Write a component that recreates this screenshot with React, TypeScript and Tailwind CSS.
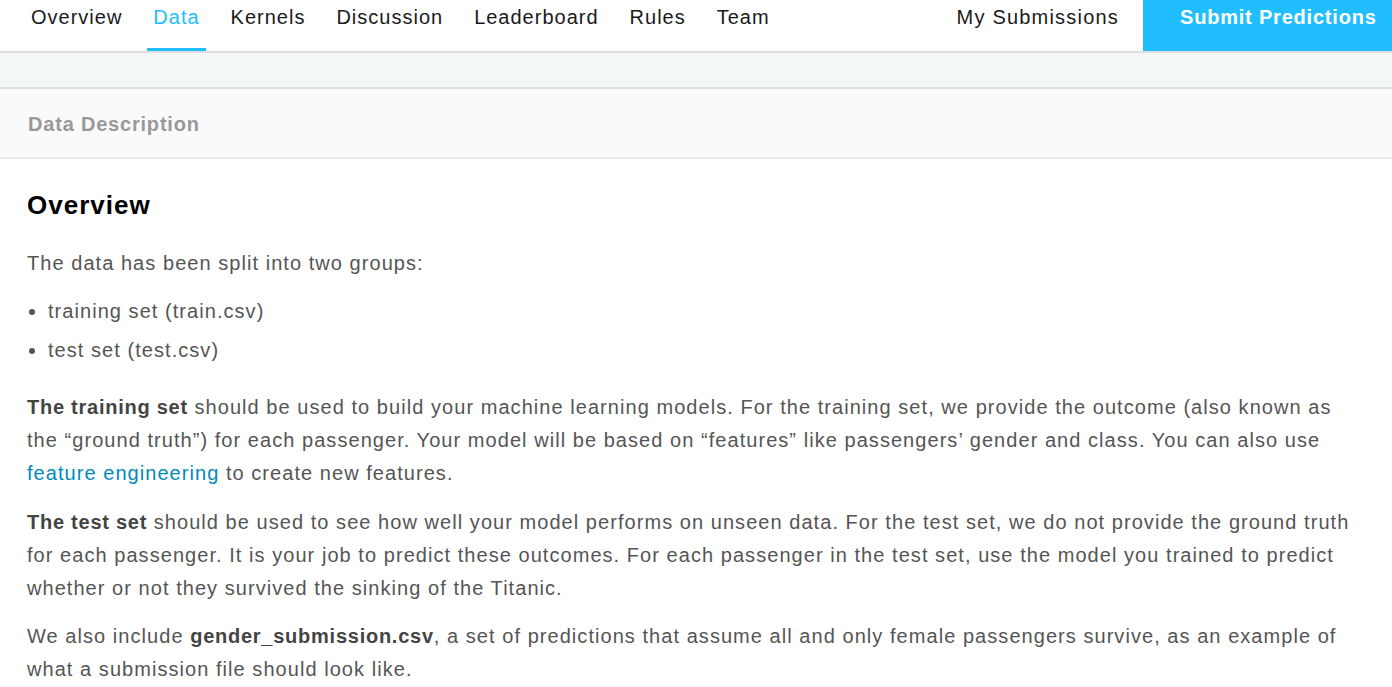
import React from "react";

const navItems = ["Overview", "Data", "Kernels", "Discussion", "Leaderboard", "Rules", "Team"];

export default function App() {
  return (
    <div className="min-h-[687px] bg-white text-[#555555] font-['Liberation_Sans',Arial,sans-serif] tracking-[1.05px]">
      <nav className="flex h-[53px] items-stretch justify-between border-b-2 border-[#dedfe0] bg-white">
        <ul className="flex items-stretch pl-[25px] gap-[19px]">
          {navItems.map((item) => (
            <li
              key={item}
              className={
                "relative flex h-[51px] px-[6px] pt-[4px] text-[20px] leading-[26px] tracking-[1px] " +
                (item === "Data" ? "text-[#20beff]" : "text-[#1a1a1a]")
              }
            >
              {item}
              {item === "Data" && (
                <span className="absolute bottom-0 left-0 right-0 h-[3px] bg-[#20beff]" />
              )}
            </li>
          ))}
        </ul>
        <div className="flex items-stretch">
          <div className="flex pt-[4px] pr-[24px] text-[20px] leading-[26px] tracking-[1.2px] text-[#1a1a1a]">
            My Submissions
          </div>
          <div className="flex h-[51px] w-[249px] bg-[#20beff] pl-[37px] pt-[4px] text-[20px] font-bold leading-[26px] tracking-[0.8px] text-white whitespace-nowrap">
            Submit Predictions
          </div>
        </div>
      </nav>
      <div className="h-[36px] border-b-2 border-[#dedfe0] bg-[#f4f7f8]" />
      <div className="flex h-[70px] items-center border-b-2 border-[#ececec] bg-[#fafafa] pl-[28px] pt-[2px]">
        <span className="text-[20px] font-bold tracking-[0.8px] text-[#999999]">Data Description</span>
      </div>
      <div className="px-[27px] pt-[28px] text-[20px] leading-[33px]">
        <h2 className="text-[26px] font-bold leading-[36px] tracking-[1px] text-[#000000]">Overview</h2>
        <p className="mt-[24px]">The data has been split into two groups:</p>
        <ul className="mt-[15px] pl-[21px] list-disc">
          <li className="mb-[6px]">training set (train.csv)</li>
          <li>test set (test.csv)</li>
        </ul>
        <p className="mt-[24px]">
          <strong className="text-[#444444] tracking-[0.75px]">The training set</strong> should be used to build your machine learning models. For the training set, we provide the outcome (also known as the “ground truth”) for each passenger. Your model will be based on “features” like passengers’ gender and class. You can also use{" "}
          <a className="text-[#008abc]">feature engineering</a> to create new features.
        </p>
        <p className="mt-[16px]">
          <strong className="text-[#444444] tracking-[0.75px]">The test set</strong> should be used to see how well your model performs on unseen data. For the test set, we do not provide the ground truth for each passenger. It is your job to predict these outcomes. For each passenger in the test set, use the model you trained to predict whether or not they survived the sinking of the Titanic.
        </p>
        <p className="mt-[15px]">
          We also include <strong className="text-[#444444] tracking-[0.75px]">gender_submission.csv</strong>, a set of predictions that assume all and only female passengers survive, as an example of what a submission file should look like.
        </p>
      </div>
    </div>
  );
}
